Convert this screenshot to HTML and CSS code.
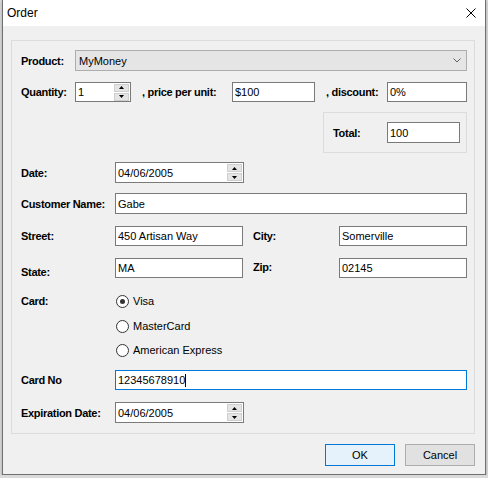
FILE: index.html
```html
<!DOCTYPE html>
<html lang="en">
<head>
    <meta charset="UTF-8">
    <title>Order</title>
    <link rel="stylesheet" href="styles.css">
</head>
<body>
    <div class="window">
        <div class="titlebar">
            <span class="title">Order</span>
            <svg class="close" width="10" height="10" viewBox="0 0 10 10">
                <path d="M0.5 0.5 L9.5 9.5 M9.5 0.5 L0.5 9.5" stroke="#000" stroke-width="1" fill="none"/>
            </svg>
        </div>

        <div class="client">
            <div class="group">
                <div class="row row-product">
                    <label class="lbl w-short">Product:</label>
                    <div class="combo">
                        <span>MyMoney</span>
                        <svg width="8" height="5" viewBox="0 0 8 5">
                            <path d="M0.5 0.5 L4 4 L7.5 0.5" stroke="#606060" stroke-width="1" fill="none"/>
                        </svg>
                    </div>
                </div>

                <div class="row row-qty">
                    <label class="lbl w-short">Quantity:</label>
                    <div class="tb spin-box qty">
                        <span class="val">1</span>
                        <div class="spinner">
                            <div class="spin-btn"><svg width="5" height="3" viewBox="0 0 5 3"><path d="M2.5 0 L5 3 L0 3 Z" fill="#000"/></svg></div>
                            <div class="spin-btn"><svg width="5" height="3" viewBox="0 0 5 3"><path d="M0 0 L5 0 L2.5 3 Z" fill="#000"/></svg></div>
                        </div>
                    </div>
                    <label class="lbl price-lbl">, price per unit:</label>
                    <div class="tb price">$100</div>
                    <label class="lbl discount-lbl">, discount:</label>
                    <div class="tb discount">0%</div>
                </div>

                <div class="row row-total">
                    <div class="total-box">
                        <label class="lbl w-short">Total:</label>
                        <div class="tb total">100</div>
                    </div>
                </div>

                <div class="row row-date">
                    <label class="lbl w-long">Date:</label>
                    <div class="tb spin-box date">
                        <span class="val">04/06/2005</span>
                        <div class="spinner">
                            <div class="spin-btn"><svg width="5" height="3" viewBox="0 0 5 3"><path d="M2.5 0 L5 3 L0 3 Z" fill="#000"/></svg></div>
                            <div class="spin-btn"><svg width="5" height="3" viewBox="0 0 5 3"><path d="M0 0 L5 0 L2.5 3 Z" fill="#000"/></svg></div>
                        </div>
                    </div>
                </div>

                <div class="row row-customer">
                    <label class="lbl w-long">Customer Name:</label>
                    <div class="tb grow">Gabe</div>
                </div>

                <div class="row row-street">
                    <label class="lbl w-long">Street:</label>
                    <div class="tb half">450 Artisan Way</div>
                    <label class="lbl col2-lbl">City:</label>
                    <div class="tb grow">Somerville</div>
                </div>

                <div class="row row-state">
                    <label class="lbl w-long state-lbl">State:</label>
                    <div class="tb half">MA</div>
                    <label class="lbl col2-lbl zip-lbl">Zip:</label>
                    <div class="tb grow">02145</div>
                </div>

                <div class="row row-card">
                    <label class="lbl w-long card-lbl">Card:</label>
                    <div class="radios">
                        <div class="radio-item"><span class="radio checked"></span>Visa</div>
                        <div class="radio-item second"><span class="radio"></span>MasterCard</div>
                        <div class="radio-item"><span class="radio"></span>American Express</div>
                    </div>
                </div>

                <div class="row row-cardno">
                    <label class="lbl w-long">Card No</label>
                    <div class="tb grow focused">12345678910<span class="caret"></span></div>
                </div>

                <div class="row row-exp">
                    <label class="lbl w-long">Expiration Date:</label>
                    <div class="tb spin-box date">
                        <span class="val">04/06/2005</span>
                        <div class="spinner">
                            <div class="spin-btn"><svg width="5" height="3" viewBox="0 0 5 3"><path d="M2.5 0 L5 3 L0 3 Z" fill="#000"/></svg></div>
                            <div class="spin-btn"><svg width="5" height="3" viewBox="0 0 5 3"><path d="M0 0 L5 0 L2.5 3 Z" fill="#000"/></svg></div>
                        </div>
                    </div>
                </div>
            </div>

            <div class="buttons">
                <button class="btn default">OK</button>
                <button class="btn">Cancel</button>
            </div>
        </div>
    </div>
</body>
</html>
```

FILE: styles.css
```css
body {
    margin: 0;
    padding: 0;
    background: #dadada;
    font-family: 'Liberation Sans', Arial, sans-serif;
    font-size: 11px;
    color: #000;
}

.window {
    box-sizing: border-box;
    margin-left: 2px;
    width: 484px;
    height: 475px;
    background: #f0f0f0;
    border: 1px solid #707070;
    border-top: none;
    box-shadow: 0 1px 3px rgba(0, 0, 0, 0.25);
}

.titlebar {
    height: 26px;
    background: #fff;
    display: flex;
    align-items: center;
    padding-left: 4px;
}

.title {
    font-size: 12px;
}

.close {
    margin-left: auto;
    margin-right: 9px;
}

.client {
    padding: 14px 10px 0 8px;
}

.group {
    border: 1px solid #dcdcdc;
    padding: 9px 7px 10px 9px;
}

.row {
    display: flex;
    align-items: center;
}

.lbl {
    font-weight: bold;
    letter-spacing: -0.3px;
    white-space: nowrap;
    flex-shrink: 0;
}

.w-short {
    width: 54px;
}

.w-long {
    width: 94px;
}

/* text boxes */
.tb {
    box-sizing: border-box;
    height: 20px;
    background: #fff;
    border: 1px solid #7a7a7a;
    padding-left: 2px;
    display: flex;
    align-items: center;
    white-space: nowrap;
    flex-shrink: 0;
}

.grow {
    flex: 1;
}

.half {
    width: 128px;
}

.focused {
    border-color: #0078d7;
}

.caret {
    display: inline-block;
    width: 1px;
    height: 13px;
    background: #000;
}

/* combo */
.row-product {
    height: 21px;
}

.combo {
    box-sizing: border-box;
    flex: 1;
    height: 21px;
    background: #e5e5e5;
    border: 1px solid #adadad;
    display: flex;
    align-items: center;
    padding: 0 5px 0 3px;
    justify-content: space-between;
}

/* quantity row */
.row-qty {
    margin-top: 11px;
}

.qty {
    width: 56px;
}

.price-lbl {
    width: 90px;
    margin-left: 11px;
}

.price {
    width: 83px;
}

.discount-lbl {
    width: 61px;
    margin-left: 11px;
}

.discount {
    width: 80px;
}

/* spinners */
.spin-box {
    padding-right: 1px;
}

.spin-box .val {
    flex: 1;
}

.spinner {
    display: flex;
    flex-direction: column;
    gap: 1px;
    width: 15px;
}

.spin-btn {
    box-sizing: border-box;
    height: 8px;
    background: #e5e5e5;
    border: 1px solid #cfcfcf;
    display: flex;
    align-items: center;
    justify-content: center;
}

.date {
    width: 129px;
    height: 21px;
}

/* total */
.row-total {
    margin-top: 10px;
    justify-content: flex-end;
}

.total-box {
    box-sizing: border-box;
    width: 144px;
    height: 41px;
    border: 1px solid #dcdcdc;
    display: flex;
    align-items: center;
    padding-left: 9px;
}

.total {
    width: 73px;
    height: 21px;
}

.row-date {
    margin-top: 9px;
}

.row-customer {
    margin-top: 10px;
}

.row-customer .tb {
    height: 21px;
}

.row-street {
    margin-top: 12px;
}

.row-state {
    margin-top: 12px;
}

.col2-lbl {
    width: 86px;
    margin-left: 10px;
}

.state-lbl {
    padding-top: 7px;
}

.zip-lbl {
    padding-bottom: 3px;
}

/* card radios */
.row-card {
    margin-top: 11px;
    align-items: flex-start;
}

.card-lbl {
    line-height: 24px;
}

.radio-item {
    height: 24px;
    display: flex;
    align-items: center;
}

.radio-item.second {
    margin-top: 1px;
}

.radio {
    box-sizing: border-box;
    width: 13px;
    height: 13px;
    margin-left: 1px;
    margin-right: 4px;
    border: 1px solid #333;
    border-radius: 50%;
    background: #fff;
    display: flex;
    align-items: center;
    justify-content: center;
}

.radio.checked::after {
    content: "";
    width: 5px;
    height: 5px;
    border-radius: 50%;
    background: #333;
}

.row-cardno {
    margin-top: 8px;
}

.row-exp {
    margin-top: 12px;
}

/* dialog buttons */
.buttons {
    display: flex;
    justify-content: flex-end;
    gap: 10px;
    margin-top: 10px;
}

.btn {
    box-sizing: border-box;
    width: 70px;
    height: 22px;
    font-family: 'Liberation Sans', Arial, sans-serif;
    font-size: 11px;
    background: #e1e1e1;
    border: 1px solid #adadad;
    padding: 0;
    color: #000;
}

.btn.default {
    background: #e5f1fb;
    border-color: #0078d7;
}
```
